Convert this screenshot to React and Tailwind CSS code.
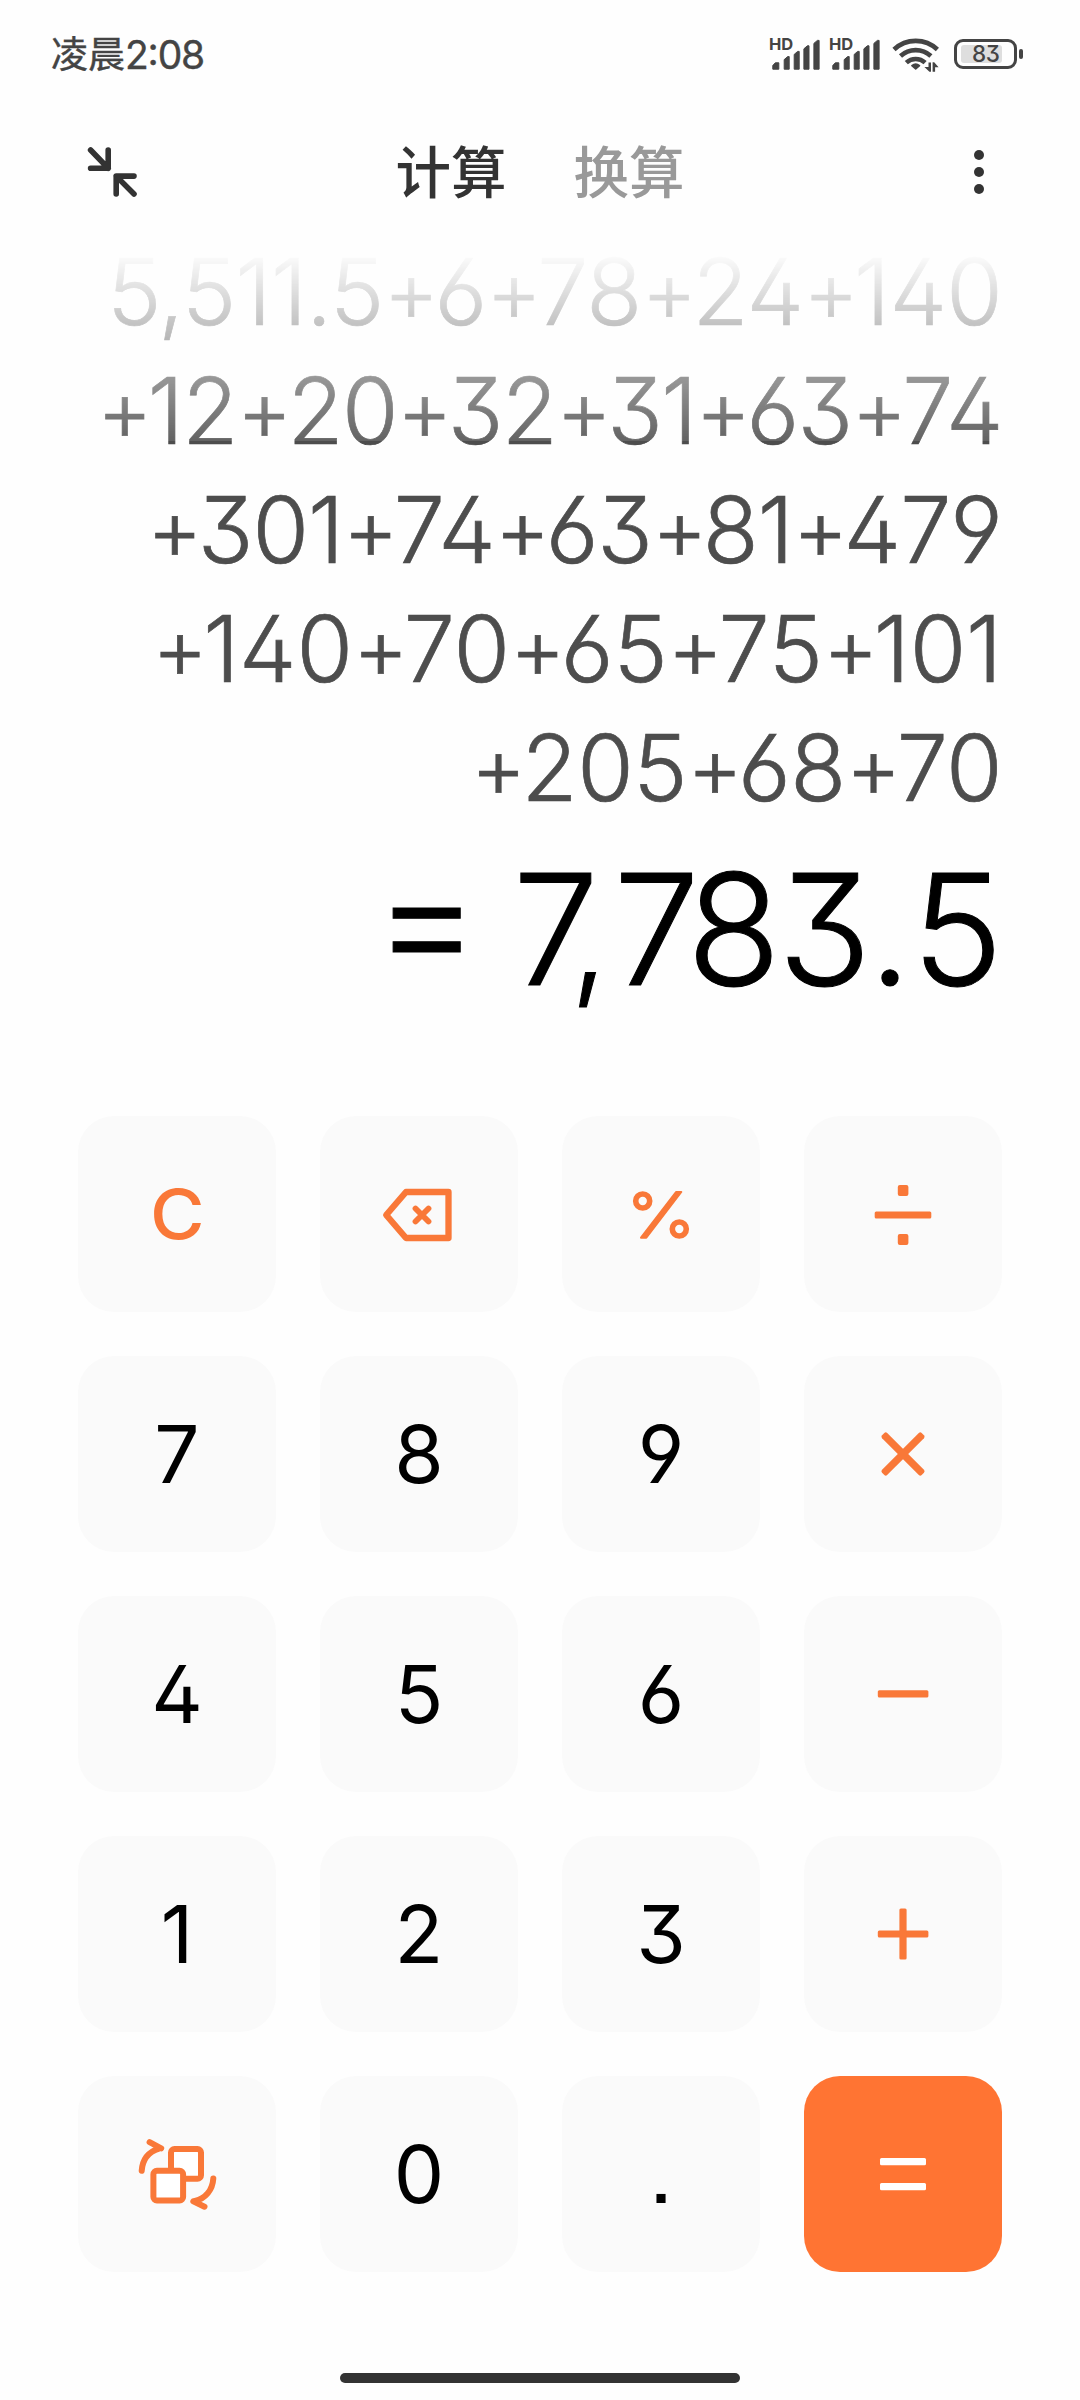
const history = [
  { text: '5,511.5+6+78+24+140', spacing: 'tracking-[-0.008em]' },
  { text: '+12+20+32+31+63+74', spacing: 'tracking-[-0.018em]' },
  { text: '+301+74+63+81+479', spacing: 'tracking-[-0.011em]' },
  { text: '+140+70+65+75+101', spacing: 'tracking-[-0.001em]' },
  { text: '+205+68+70', spacing: 'tracking-[-0.005em]' },
]

function SignalIcon() {
  return (
    <div className="relative w-[50px] h-8">
      <span className="absolute left-[-1px] top-0 text-[16.5px] leading-[12px] font-bold">HD</span>
      <svg className="absolute inset-0 w-[50px] h-8" viewBox="0 0 50 32" fill="currentColor" stroke="currentColor" strokeWidth="1" strokeLinejoin="round">
        <path d="M2.8 27.5l2.5-2.7h3.5v6.4h-6zM14.2 21.6l3.5-3h1.5v12.6h-5zM24.2 16.4l3.5-3h1.5v17.8h-5zM33.9 10.8l3.5-3H39v23.4h-5.1zM43.9 5.4l3.5-3h1.7v28.8h-5.2z" />
      </svg>
    </div>
  )
}

function WifiIcon() {
  return (
    <svg className="w-12 h-9" viewBox="0 0 48 36" fill="none" stroke="currentColor" strokeWidth="4.6">
      <path d="M2 13.5a31.5 31.5 0 0 1 43.4 0" />
      <path d="M8.5 20a22.5 22.5 0 0 1 30.4 0" />
      <path d="M14.3 26.6a14 14 0 0 1 18.8 0" />
      <path d="M19.9 29.6q3.8-3 7.6 0L23.7 33z" fill="currentColor" stroke="currentColor" strokeWidth="1.6" strokeLinejoin="round" />
      <path d="M36.5 26.5h2.5v9.3h-1.6l-5-4.8h4.1zM40.6 35.8v-9.6h1.6l4.4 5h-3.5v4.6z" fill="currentColor" stroke="none" />
    </svg>
  )
}

function Battery() {
  return (
    <div className="flex items-center gap-[2px]">
      <div className="flex w-[63px] h-[30px] p-[3px] pl-1 rounded-[9px] border-[3px] border-[#444]">
        <div className="relative w-[41px] h-[18px] rounded-[3px] bg-[#dedede]">
          <span className="absolute left-[11px] top-0 text-[22.5px] leading-[18px] font-medium tracking-[-0.02em]">83</span>
        </div>
      </div>
      <div className="w-1 h-[10px] rounded-[2px] bg-[#444]" />
    </div>
  )
}

function StatusBar() {
  return (
    <div className="flex items-center justify-between h-[108px] pl-[51px] pr-[57px] text-[#444]">
      <div className="flex items-center [-webkit-text-stroke:0.4px_#444]">
        <span className="pb-[4px] font-['Noto_Sans_CJK_SC',sans-serif] text-[37px] leading-none">凌晨</span>
        <span className="text-[39px] leading-none tracking-[-0.03em] [font-feature-settings:'case']">2:08</span>
      </div>
      <div className="flex items-center">
        <SignalIcon />
        <div className="w-[10px]" />
        <SignalIcon />
        <div className="w-[12px]" />
        <WifiIcon />
        <div className="w-[14px]" />
        <Battery />
      </div>
    </div>
  )
}

function Header() {
  return (
    <div className="flex items-center justify-between h-[132px] px-[83px] pb-[4px] text-[#333]">
      <svg className="w-[58px] h-[58px]" viewBox="83 143 58 58" fill="none" stroke="currentColor" strokeWidth="5.6" strokeLinecap="round" strokeLinejoin="round">
        <path d="M90.6 150l17.6 18.2M108.2 150v18.2H90.6M134 194l-17.8-17.9M134 176.1h-17.8V194" />
      </svg>
      <div className="flex gap-[67px] pb-[4px] font-['Noto_Sans_CJK_SC',sans-serif] text-[55.5px] leading-none font-medium">
        <span>计算</span>
        <span className="text-[#999]">换算</span>
      </div>
      <div className="flex w-[58px] flex-col items-center gap-[7px] pl-[22px]">
        <span className="size-[10px] rounded-full bg-[#333]" />
        <span className="size-[10px] rounded-full bg-[#333]" />
        <span className="size-[10px] rounded-full bg-[#333]" />
      </div>
    </div>
  )
}

// plus signs are set a little smaller and tighter than the digits
function Expression({ text, spacing }) {
  return (
    <div className={`h-[119px] whitespace-nowrap ${spacing}`}>
      {text.split(/(\+)/).map((part, i) =>
        part === '+' ? (
          <span key={i} className="align-[3px] text-[85px] leading-none tracking-[-0.055em]">+</span>
        ) : (
          part
        )
      )}
    </div>
  )
}

function Display() {
  return (
    <div className="h-[884px] -mt-2 pr-[78px]">
      <div className="h-[595px] text-right text-[91.5px] leading-[119px] font-light text-[#4d4d4d] [-webkit-text-stroke:0.7px_#4d4d4d] mask-[linear-gradient(to_bottom,transparent_21px,rgba(0,0,0,0.88)_209px,black_209px)]">
        {history.map((line) => (
          <Expression key={line.text} text={line.text} spacing={line.spacing} />
        ))}
      </div>
      <div className="h-[204px] pr-[2px] text-right text-[154px] leading-[204px] font-light text-black tracking-[-0.02em] whitespace-nowrap [-webkit-text-stroke:1px_#000]">
        <span className="align-[8px] mr-[-5px] text-[165px] leading-none">=</span>{' '}
        <span className="tracking-[-0.185em]">7</span>
        <span className="text-[134px] leading-none tracking-[0.04em]">,</span>
        <span className="tracking-[-0.085em]">7</span>83<span className="tracking-[0em]">.</span>5
      </div>
    </div>
  )
}

function KeyIcon({ children }) {
  return (
    <svg className="size-[100px]" viewBox="0 0 100 100" fill="none" stroke="currentColor" strokeLinecap="round" strokeLinejoin="round">
      {children}
    </svg>
  )
}

const icons = {
  back: (
    <KeyIcon>
      <path d="M17.2 51L37 28h42.5v46H37z" strokeWidth="6.3" />
      <path d="M46.5 44.5l13 13M59.5 44.5l-13 13" strokeWidth="5.8" />
    </KeyIcon>
  ),
  percent: (
    <KeyIcon>
      <circle cx="31.7" cy="37" r="7" strokeWidth="5.6" />
      <circle cx="68.3" cy="65" r="7" strokeWidth="5.6" />
      <path d="M65 28h5.3L35.3 73.7H30z" fill="currentColor" strokeWidth="2" />
    </KeyIcon>
  ),
  divide: (
    <KeyIcon>
      <g fill="currentColor" stroke="none">
        <rect x="21.7" y="47.4" width="56.6" height="7.2" rx="1.5" />
        <rect x="44.8" y="21" width="10.6" height="11" rx="2" />
        <rect x="44.8" y="70" width="10.6" height="11" rx="2" />
      </g>
    </KeyIcon>
  ),
  times: (
    <KeyIcon>
      <g fill="currentColor" stroke="none">
        <rect x="22" y="46.4" width="56" height="7.2" rx="2" transform="rotate(45 50 50)" />
        <rect x="22" y="46.4" width="56" height="7.2" rx="2" transform="rotate(-45 50 50)" />
      </g>
    </KeyIcon>
  ),
  minus: (
    <KeyIcon>
      <rect x="24.8" y="46.2" width="50.6" height="7.4" rx="1.5" fill="currentColor" stroke="none" />
    </KeyIcon>
  ),
  plus: (
    <KeyIcon>
      <g fill="currentColor" stroke="none">
        <rect x="24.8" y="46.4" width="50.6" height="7.2" rx="1.5" />
        <rect x="46.4" y="24.6" width="7.2" height="51" rx="1.5" />
      </g>
    </KeyIcon>
  ),
  equals: (
    <KeyIcon>
      <g fill="currentColor" stroke="none">
        <rect x="27" y="34.1" width="46" height="7.2" rx="1.5" />
        <rect x="27" y="59" width="46" height="7.2" rx="1.5" />
      </g>
    </KeyIcon>
  ),
  convert: (
    <KeyIcon>
      <g strokeWidth="6">
        <rect x="44" y="25" width="30" height="29.7" rx="3.5" fill="#fff" />
        <rect x="26.4" y="46.8" width="29.7" height="29.7" rx="3.5" fill="#fff" />
        <path d="M14.7 46.8C15.4 36 21 28 32 24.6M22.6 18.2l11.6 6.2M86.3 54.6C85.6 66 78.5 74.5 68 77M77.5 82.7L66.3 77.3" />
      </g>
    </KeyIcon>
  ),
}

const orange = 'bg-[#fafafa] text-[#f97838]'
const digit = 'bg-[#fafafa] text-black'

const keys = [
  { id: 'C', style: orange, label: <span className="scale-x-108 text-[69px] font-medium">C</span> },
  { id: 'back', style: orange, label: icons.back },
  { id: 'percent', style: orange, label: icons.percent },
  { id: 'divide', style: orange, label: icons.divide },
  { id: '7', style: digit, label: '7' },
  { id: '8', style: digit, label: '8' },
  { id: '9', style: digit, label: '9' },
  { id: 'times', style: orange, label: icons.times },
  { id: '4', style: digit, label: '4' },
  { id: '5', style: digit, label: '5' },
  { id: '6', style: digit, label: '6' },
  { id: 'minus', style: orange, label: icons.minus },
  { id: '1', style: digit, label: '1' },
  { id: '2', style: digit, label: '2' },
  { id: '3', style: digit, label: '3' },
  { id: 'plus', style: orange, label: icons.plus },
  { id: 'convert', style: orange, label: icons.convert },
  { id: '0', style: digit, label: '0' },
  { id: 'dot', style: digit, label: <span className="[font-feature-settings:'ss07']">.</span> },
  { id: 'equals', style: 'bg-[#ff7433] text-white', label: icons.equals },
]

export default function App() {
  return (
    <div className="w-[1080px] h-[2400px] overflow-hidden bg-[#fefefe] font-['Inter','Liberation_Sans',sans-serif] [font-feature-settings:'ss01','cv09','cv03','cv04']">
      <StatusBar />
      <Header />
      <Display />
      <div className="grid grid-cols-4 gap-11 px-[78px]">
        {keys.map((key) => (
          <button key={key.id} className={`flex items-center justify-center h-[196px] rounded-[36px] text-[80px] leading-none ${key.style}`}>
            {key.label}
          </button>
        ))}
      </div>
      <div className="mx-auto mt-[101px] w-[400px] h-[10px] rounded-full bg-[#333]" />
    </div>
  )
}
